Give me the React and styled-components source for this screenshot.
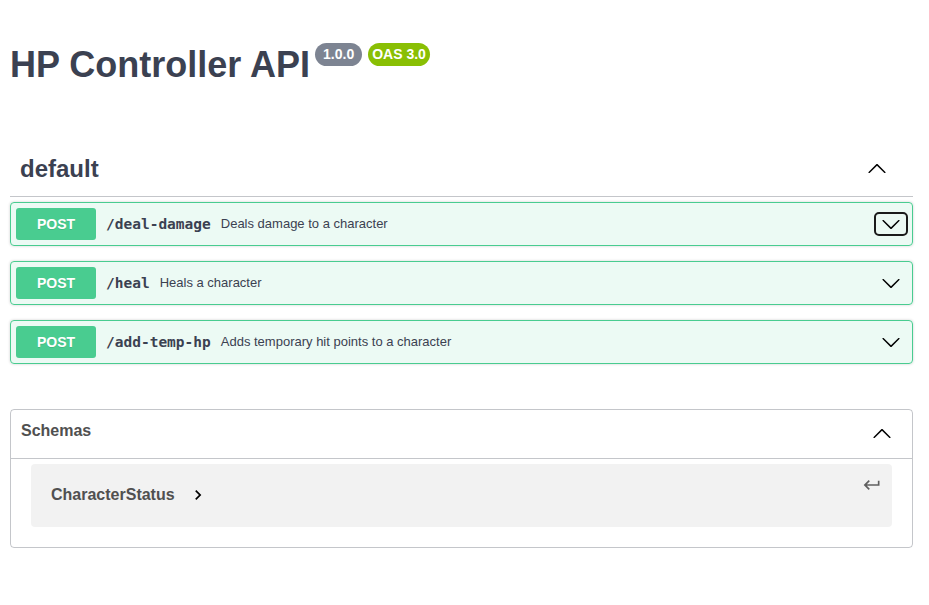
import React from "react";
import styled, {createGlobalStyle} from "styled-components";

const GlobalStyle = createGlobalStyle`
  body {
    margin: 0;
    background: #fff;
    font-family: "Liberation Sans", Arial, sans-serif;
    color: #3b4151;
  }
`;

const Page = styled.div`
  padding: 45px 16px 40px 10px;
`;

const Title = styled.h2`
  display: flex;
  align-items: flex-start;
  margin: 0;
  font-size: 36px;
  font-weight: 700;
  line-height: 40px;
  color: #3b4151;
`;

const Badge = styled.span`
  display: inline-block;
  margin: -2px 0 0 ${({$gap}) => $gap}px;
  padding: 0 ${({$pad}) => $pad}px;
  height: 23px;
  line-height: 23px;
  border-radius: 57px;
  background: ${({$bg}) => $bg};
  color: #fff;
  font-size: 14px;
  font-weight: 700;
`;

const TagSection = styled.section`
  margin-top: 56px;
`;

const TagHeader = styled.div`
  display: flex;
  align-items: center;
  justify-content: space-between;
  height: 55px;
  padding: 0 26px 0 10px;
  border-bottom: 1px solid rgba(59, 65, 81, 0.3);
`;

const TagName = styled.h3`
  margin: 0;
  font-size: 24px;
  font-weight: 700;
  color: #3b4151;
`;

const OpList = styled.div`
  display: flex;
  flex-direction: column;
  gap: 15px;
  padding-top: 5px;
`;

const Opblock = styled.div`
  display: flex;
  align-items: center;
  height: 32px;
  padding: 5px;
  border: 1px solid #49cc90;
  border-radius: 4px;
  background: rgba(73, 204, 144, 0.1);
  box-shadow: 0 0 3px rgba(0, 0, 0, 0.19);
`;

const Method = styled.span`
  display: flex;
  align-items: center;
  justify-content: center;
  flex: none;
  width: 80px;
  height: 32px;
  border-radius: 3px;
  background: #49cc90;
  color: #fff;
  font-size: 14px;
  font-weight: 700;
  text-shadow: 0 1px 0 rgba(0, 0, 0, 0.1);
`;

const Path = styled.span`
  padding: 0 10px;
  font-family: "DejaVu Sans Mono", "Liberation Mono", monospace;
  font-size: 14.5px;
  font-weight: 700;
  color: #3b4151;
`;

const Desc = styled.span`
  flex: 1;
  margin-bottom: 1px;
  font-size: 13px;
  color: #3b4151;
`;

const ArrowButton = styled.button`
  display: flex;
  align-items: center;
  justify-content: center;
  box-sizing: border-box;
  width: 34px;
  height: 24px;
  margin-right: -1px;
  padding: 0;
  border: 2px solid ${({$focused}) => ($focused ? "#1b1b1b" : "transparent")};
  border-radius: 5px;
  background: none;
`;

const Models = styled.section`
  margin-top: 45px;
  border: 1px solid rgba(59, 65, 81, 0.3);
  border-radius: 4px;
`;

const ModelsHeader = styled.div`
  display: flex;
  align-items: center;
  justify-content: space-between;
  height: 48px;
  padding: 0 20px 0 10px;
  border-bottom: 1px solid rgba(59, 65, 81, 0.3);
`;

const ModelsTitle = styled.h4`
  margin: 0 0 6px;
  font-size: 16px;
  font-weight: 700;
  color: #505050;
`;

const ModelBox = styled.div`
  display: flex;
  align-items: center;
  box-sizing: border-box;
  height: 63px;
  margin: 5px 20px 20px;
  padding: 0 10px 2px 20px;
  border-radius: 4px;
  background: rgba(0, 0, 0, 0.05);
`;

const ModelTitle = styled.span`
  font-size: 16px;
  font-weight: 700;
  color: #505050;
`;

const ModelToggle = styled.svg`
  margin-left: 13px;
`;

const JumpTo = styled.svg`
  align-self: flex-start;
  margin: 11px 0 0 auto;
`;

const Chevron = ({up, size = 20}) => (
  <svg
    width={size}
    height={size}
    viewBox='0 0 20 20'
    style={up ? {transform: "rotate(180deg)"} : undefined}
  >
    <path
      fill='#000'
      d='M17.418 6.109c.272-.268.709-.268.979 0s.271.701 0 .969l-7.908 7.83c-.27.268-.707.268-.979 0l-7.908-7.83c-.27-.268-.27-.701 0-.969.271-.268.709-.268.979 0L10 13.25l7.418-7.141z'
    />
  </svg>
);

const operations = [
  {path: "/deal-damage", summary: "Deals damage to a character", focused: true},
  {path: "/heal", summary: "Heals a character"},
  {path: "/add-temp-hp", summary: "Adds temporary hit points to a character"},
];

const App = () => {
  return (
    <>
      <GlobalStyle />
      <Page>
        <Title>
          HP Controller API
          <Badge $bg='#7d8492' $pad={8} $gap={5}>
            1.0.0
          </Badge>
          <Badge $bg='#89bf04' $pad={4} $gap={6}>
            OAS 3.0
          </Badge>
        </Title>

        <TagSection>
          <TagHeader>
            <TagName>default</TagName>
            <Chevron up />
          </TagHeader>
          <OpList>
            {operations.map((op) => (
              <Opblock key={op.path}>
                <Method>POST</Method>
                <Path>{op.path}</Path>
                <Desc>{op.summary}</Desc>
                <ArrowButton $focused={op.focused}>
                  <Chevron />
                </ArrowButton>
              </Opblock>
            ))}
          </OpList>
        </TagSection>

        <Models>
          <ModelsHeader>
            <ModelsTitle>Schemas</ModelsTitle>
            <Chevron up />
          </ModelsHeader>
          <ModelBox>
            <ModelTitle>CharacterStatus</ModelTitle>
            <ModelToggle width='20' height='20' viewBox='0 0 24 24'>
              <path fill='#000' d='M10 6 8.59 7.41 13.17 12l-4.58 4.59L10 18l6-6z' />
            </ModelToggle>
            <JumpTo width='20' height='20' viewBox='0 0 24 24'>
              <path
                fill='#606060'
                d='M19 7v4H5.83l3.58-3.59L8 6l-6 6 6 6 1.41-1.41L5.83 13H21V7z'
              />
            </JumpTo>
          </ModelBox>
        </Models>
      </Page>
    </>
  );
};

export default App;
